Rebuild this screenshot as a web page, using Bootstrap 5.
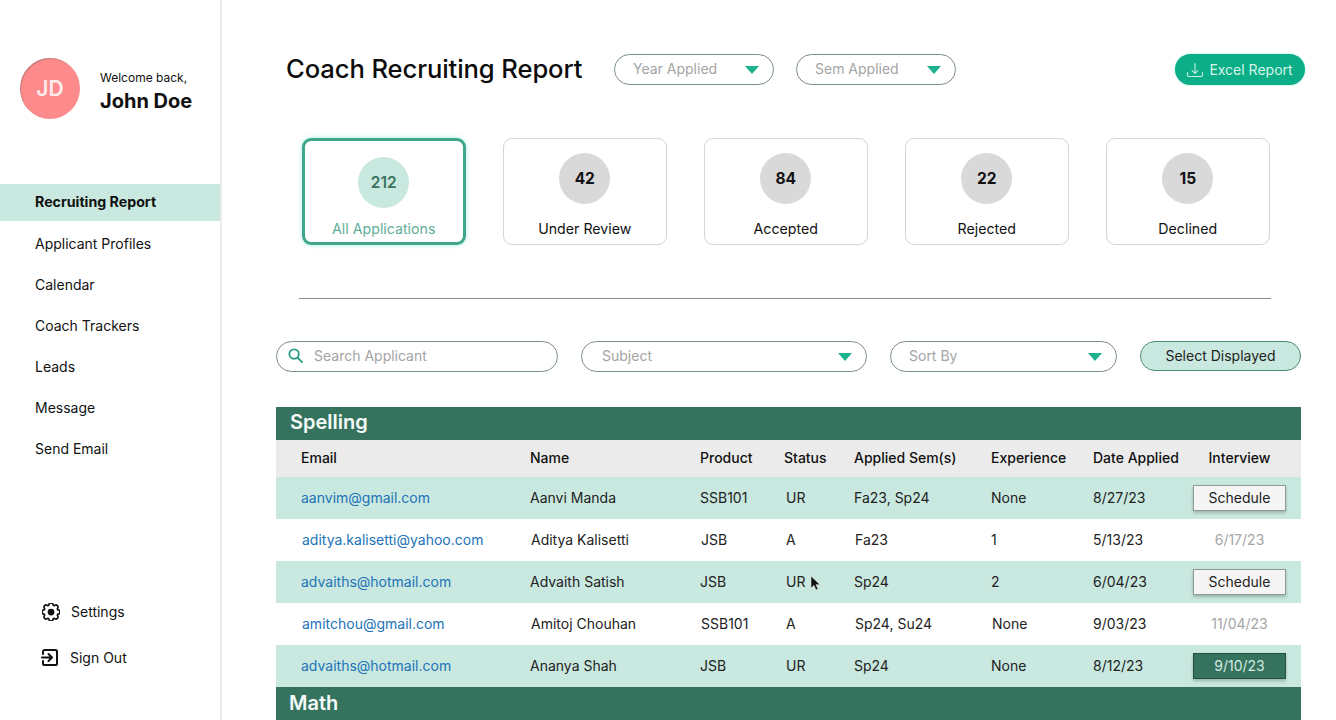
<!DOCTYPE html>
<html lang="en">
<head>
<meta charset="utf-8">
<title>Coach Recruiting Report</title>
<link href="https://cdn.jsdelivr.net/npm/bootstrap@5.3.0/dist/css/bootstrap.min.css" rel="stylesheet">
<style>
html,body{height:720px;overflow:hidden}
body{font-family:Inter,"Liberation Sans",sans-serif;color:#111;background:#fff;font-size:14px}
.app-shell{height:720px;position:relative}
.side{width:222px;flex:none;border-right:2px solid #ececec;height:720px}
.who{padding:58px 0 0 20px;height:184px;gap:20px}
.avatar{width:60px;height:61px;border-radius:50%;background:#fe8b8b;color:#fbeaea;font-weight:600;font-size:21px;flex:none;box-shadow:inset 1px 1px 1px rgba(90,90,90,.35);padding-top:1px}
.welcome{font-size:12px;line-height:14px;margin-top:13px}
.uname{font-size:20px;font-weight:700;line-height:24px;margin-top:4px}
.side-link{display:block;height:37px;line-height:38px;padding-left:35px;margin-bottom:4px;color:#111;text-decoration:none;font-size:14px}
.side-link.on{background:#c9e8df;font-weight:700;font-size:14.2px;line-height:36px}
.side-foot{margin-top:auto;padding-bottom:40px}
.foot-link{height:45px;color:#111;text-decoration:none;font-size:14px;gap:11px}
.foot-gear{padding-left:42px;padding-bottom:2px}
.foot-out{padding-left:40px}
.main-area{width:1114px;padding-left:54px;flex:none}
.top-row{height:31px;margin-top:54px;padding-left:10px}
.page-title{font-size:25.6px;font-weight:500;margin:0;width:328px;color:#0c0c0c;letter-spacing:-.1px;white-space:nowrap}
.pick{height:31px;border:1px solid #7d8f89;background:#fff;color:#a4a4a4;padding:0 14px 2px 18px;font-size:14px}
.pick-year{width:160px;margin-right:22px}
.pick-last{margin-right:0}
.caret-t{width:0;height:0;border-left:7px solid transparent;border-right:7px solid transparent;border-top:8px solid #1cb28e;margin-top:2px}
.excel{margin-left:219px;width:130px;height:31px;background:#0bae86;color:#d6f5ea;border:0;font-size:14px;gap:6px;box-shadow:0 0 2px #8fe9d2;padding:0}
.excel:hover{background:#0bae86;color:#d6f5ea}
.stats{margin:53px 0 0 26px;gap:37.5px}
.stat{width:163.5px;height:107px;border:1px solid #d4d4da;border-radius:9px;padding-top:14px}
.stat.on{border:3px solid #3fa68c;box-shadow:0 0 5px #a5efdc;padding-top:16px}
.dot{width:51px;height:51px;border-radius:50%;background:#d9d9d9;font-weight:700;font-size:15.5px;color:#111}
.stat.on .dot{background:#c9e8df;color:#3a7360;font-weight:600}
.stat-lbl{font-size:14.2px;margin-top:15px;line-height:20px}
.stat.on .stat-lbl{color:#5fae9a;margin-top:11px}
.split{border:0;border-top:1px solid #8b8b8b;opacity:1;margin:53px 0 0 23px;width:972px}
.filters{margin-top:42px;height:31px}
.search-box{width:282px;margin-right:23px;justify-content:flex-start;padding-left:11px;gap:11px}
.pick-sub{width:286px;margin-right:23px;padding-left:20px}
.pick-sort{width:227px;margin-right:23px}
.select-all{width:161px;height:30px;background:#c9e8df;border:1px solid #4e8a78;color:#222;font-size:14px;padding:0 0 2px}
.select-all:hover{background:#c9e8df;color:#222}
.sheet{width:1025px;margin-top:35px}
.band{height:33px;background:#36735f;color:#f4faf8;font-size:20px;font-weight:600;padding-left:14px;line-height:31px}
.band-next{padding-left:13px;line-height:33px}
.sheet-tbl{table-layout:fixed;width:1025px;margin:0;font-size:14px;color:#222}
.sheet-tbl th,.sheet-tbl td{padding:0 0 2px;border:0;background:transparent;box-shadow:none;vertical-align:middle;white-space:nowrap}
.sheet-tbl th{height:37px;background:#ebebeb;font-weight:500;color:#111}
.sheet-tbl td{height:42px}
.sheet-tbl tr.tint td{background:#c9e8df}
.sheet-tbl tr.plain td{background:#fff}
.sheet-tbl th:first-child,.sheet-tbl td:first-child{padding-left:25px}
.sheet-tbl td:nth-child(4){padding-left:2px}
.sheet-tbl tr.nudge td:nth-child(2),.sheet-tbl tr.nudge td:nth-child(3),.sheet-tbl tr.nudge td:nth-child(5){padding-left:1px}
.sheet-tbl tr.nudge td:first-child{padding-left:26px}
.sheet-tbl td.shift{padding-left:1px}
.sheet-tbl a{color:#2273b8;text-decoration:none}
.sheet-tbl .iv{text-align:center;padding-right:15px}
.sched{width:93px;height:26px;background:#f5f5f5;border:1px solid #8d9a96;border-radius:0;color:#222;font-size:14px;padding:0;box-shadow:0 2px 3px rgba(70,90,85,.35);line-height:22px;margin-top:2px}
.sched:hover{background:#f5f5f5;color:#222}
.sched.done{background:#36735f;color:#d4e9e2;border-color:#234f41}
.sched.done:hover{background:#36735f;color:#d4e9e2}
.sheet-tbl .past{color:#a5a5a5}
.pointer{position:absolute;left:810px;top:575px}
</style>
</head>
<body>
<div class="app-shell d-flex">
  <aside class="side d-flex flex-column">
    <div class="who d-flex align-items-start">
      <div class="avatar d-flex align-items-center justify-content-center">JD</div>
      <div>
        <div class="welcome">Welcome back,</div>
        <div class="uname">John Doe</div>
      </div>
    </div>
    <nav>
      <a class="side-link on" href="#">Recruiting Report</a>
      <a class="side-link" href="#">Applicant Profiles</a>
      <a class="side-link" href="#">Calendar</a>
      <a class="side-link" href="#">Coach Trackers</a>
      <a class="side-link" href="#">Leads</a>
      <a class="side-link" href="#">Message</a>
      <a class="side-link" href="#">Send Email</a>
    </nav>
    <div class="side-foot">
      <a class="foot-link foot-gear d-flex align-items-center" href="#">
        <svg width="18" height="18" viewBox="0 0 16 16" fill="none" stroke="#111" stroke-width="1.5"><path d="M9.796 1.343c-.527-1.79-3.065-1.79-3.592 0l-.094.319a.873.873 0 0 1-1.255.52l-.292-.16c-1.64-.892-3.433.902-2.54 2.541l.159.292a.873.873 0 0 1-.52 1.255l-.319.094c-1.79.527-1.79 3.065 0 3.592l.319.094a.873.873 0 0 1 .52 1.255l-.16.292c-.892 1.64.901 3.434 2.541 2.54l.292-.159a.873.873 0 0 1 1.255.52l.094.319c.527 1.79 3.065 1.79 3.592 0l.094-.319a.873.873 0 0 1 1.255-.52l.292.16c1.64.893 3.434-.902 2.54-2.541l-.159-.292a.873.873 0 0 1 .52-1.255l.319-.094c1.79-.527 1.79-3.065 0-3.592l-.319-.094a.873.873 0 0 1-.52-1.255l.16-.292c.893-1.64-.902-3.433-2.541-2.54l-.292.159a.873.873 0 0 1-1.255-.52l-.094-.319z"/><circle cx="8" cy="8" r="3" fill="#111" stroke="none"/></svg>
        <span>Settings</span>
      </a>
      <a class="foot-link foot-out d-flex align-items-center" href="#">
        <svg width="19" height="19" viewBox="0 0 19 19" fill="none" stroke="#111" stroke-width="2" stroke-linecap="round" stroke-linejoin="round"><path d="M3 6V3.6A1.6 1.6 0 0 1 4.6 2h10.8A1.6 1.6 0 0 1 17 3.6v11.8a1.6 1.6 0 0 1-1.6 1.6H4.6A1.6 1.6 0 0 1 3 15.4V13"/><path d="M2 9.5h9.5M8.5 6l3.5 3.5L8.5 13"/></svg>
        <span>Sign Out</span>
      </a>
    </div>
  </aside>
  <main class="main-area">
    <div class="top-row d-flex align-items-center">
      <h1 class="page-title">Coach Recruiting Report</h1>
      <div class="pick pick-year rounded-pill d-flex align-items-center justify-content-between"><span>Year Applied</span><span class="caret-t"></span></div>
      <div class="pick pick-year pick-last rounded-pill d-flex align-items-center justify-content-between"><span>Sem Applied</span><span class="caret-t"></span></div>
      <button class="btn excel rounded-pill d-flex align-items-center justify-content-center" type="button">
        <svg width="16" height="16" viewBox="0 0 16 16" fill="#d6f5ea"><path d="M.5 9.9a.5.5 0 0 1 .5.5v2.5a1 1 0 0 0 1 1h12a1 1 0 0 0 1-1v-2.5a.5.5 0 0 1 1 0v2.5a2 2 0 0 1-2 2H2a2 2 0 0 1-2-2v-2.5a.5.5 0 0 1 .5-.5z"/><path d="M7.646 11.854a.5.5 0 0 0 .708 0l3-3a.5.5 0 0 0-.708-.708L8.5 10.293V1.5a.5.5 0 0 0-1 0v8.793L5.354 8.146a.5.5 0 1 0-.708.708l3 3z"/></svg>
        <span>Excel Report</span>
      </button>
    </div>
    <div class="stats d-flex">
      <div class="stat on d-flex flex-column align-items-center"><div class="dot d-flex align-items-center justify-content-center">212</div><div class="stat-lbl">All Applications</div></div>
      <div class="stat d-flex flex-column align-items-center"><div class="dot d-flex align-items-center justify-content-center">42</div><div class="stat-lbl">Under Review</div></div>
      <div class="stat d-flex flex-column align-items-center"><div class="dot d-flex align-items-center justify-content-center">84</div><div class="stat-lbl">Accepted</div></div>
      <div class="stat d-flex flex-column align-items-center"><div class="dot d-flex align-items-center justify-content-center">22</div><div class="stat-lbl">Rejected</div></div>
      <div class="stat d-flex flex-column align-items-center"><div class="dot d-flex align-items-center justify-content-center">15</div><div class="stat-lbl">Declined</div></div>
    </div>
    <hr class="split">
    <div class="filters d-flex align-items-start">
      <div class="pick search-box rounded-pill d-flex align-items-center">
        <svg width="15" height="15" viewBox="0 0 16 16" fill="none" stroke="#2a9d85" stroke-width="2" stroke-linecap="round"><circle cx="6.5" cy="6.5" r="5"/><path d="M10.5 10.5 15 15"/></svg>
        <span>Search Applicant</span>
      </div>
      <div class="pick pick-sub rounded-pill d-flex align-items-center justify-content-between"><span>Subject</span><span class="caret-t"></span></div>
      <div class="pick pick-sort rounded-pill d-flex align-items-center justify-content-between"><span>Sort By</span><span class="caret-t"></span></div>
      <button class="btn select-all rounded-pill" type="button">Select Displayed</button>
    </div>
    <section class="sheet">
      <div class="band">Spelling</div>
      <table class="table sheet-tbl">
        <colgroup><col style="width:254px"><col style="width:170px"><col style="width:84px"><col style="width:70px"><col style="width:137px"><col style="width:102px"><col style="width:100px"><col></colgroup>
        <thead><tr><th>Email</th><th>Name</th><th>Product</th><th>Status</th><th>Applied Sem(s)</th><th>Experience</th><th>Date Applied</th><th class="iv">Interview</th></tr></thead>
        <tbody>
          <tr class="tint"><td><a href="#">aanvim@gmail.com</a></td><td>Aanvi Manda</td><td>SSB101</td><td>UR</td><td>Fa23, Sp24</td><td>None</td><td>8/27/23</td><td class="iv"><button class="btn sched" type="button">Schedule</button></td></tr>
          <tr class="plain nudge"><td><a href="#">aditya.kalisetti@yahoo.com</a></td><td>Aditya Kalisetti</td><td>JSB</td><td>A</td><td>Fa23</td><td>1</td><td>5/13/23</td><td class="iv past">6/17/23</td></tr>
          <tr class="tint"><td><a href="#">advaiths@hotmail.com</a></td><td>Advaith Satish</td><td>JSB</td><td>UR</td><td>Sp24</td><td>2</td><td>6/04/23</td><td class="iv"><button class="btn sched" type="button">Schedule</button></td></tr>
          <tr class="plain nudge"><td><a href="#">amitchou@gmail.com</a></td><td>Amitoj Chouhan</td><td>SSB101</td><td>A</td><td>Sp24, Su24</td><td class="shift">None</td><td>9/03/23</td><td class="iv past">11/04/23</td></tr>
          <tr class="tint"><td><a href="#">advaiths@hotmail.com</a></td><td>Ananya Shah</td><td>JSB</td><td>UR</td><td>Sp24</td><td>None</td><td>8/12/23</td><td class="iv"><button class="btn sched done" type="button">9/10/23</button></td></tr>
        </tbody>
      </table>
      <div class="band band-next">Math</div>
    </section>
  </main>
  <svg class="pointer" width="11" height="17" viewBox="0 0 11 17"><path d="M1 1v12l3-2.6 2 4.6 2-.9-2-4.4h4z" fill="#111" stroke="#ddd" stroke-width=".6"/></svg>
</div>
</body>
</html>
